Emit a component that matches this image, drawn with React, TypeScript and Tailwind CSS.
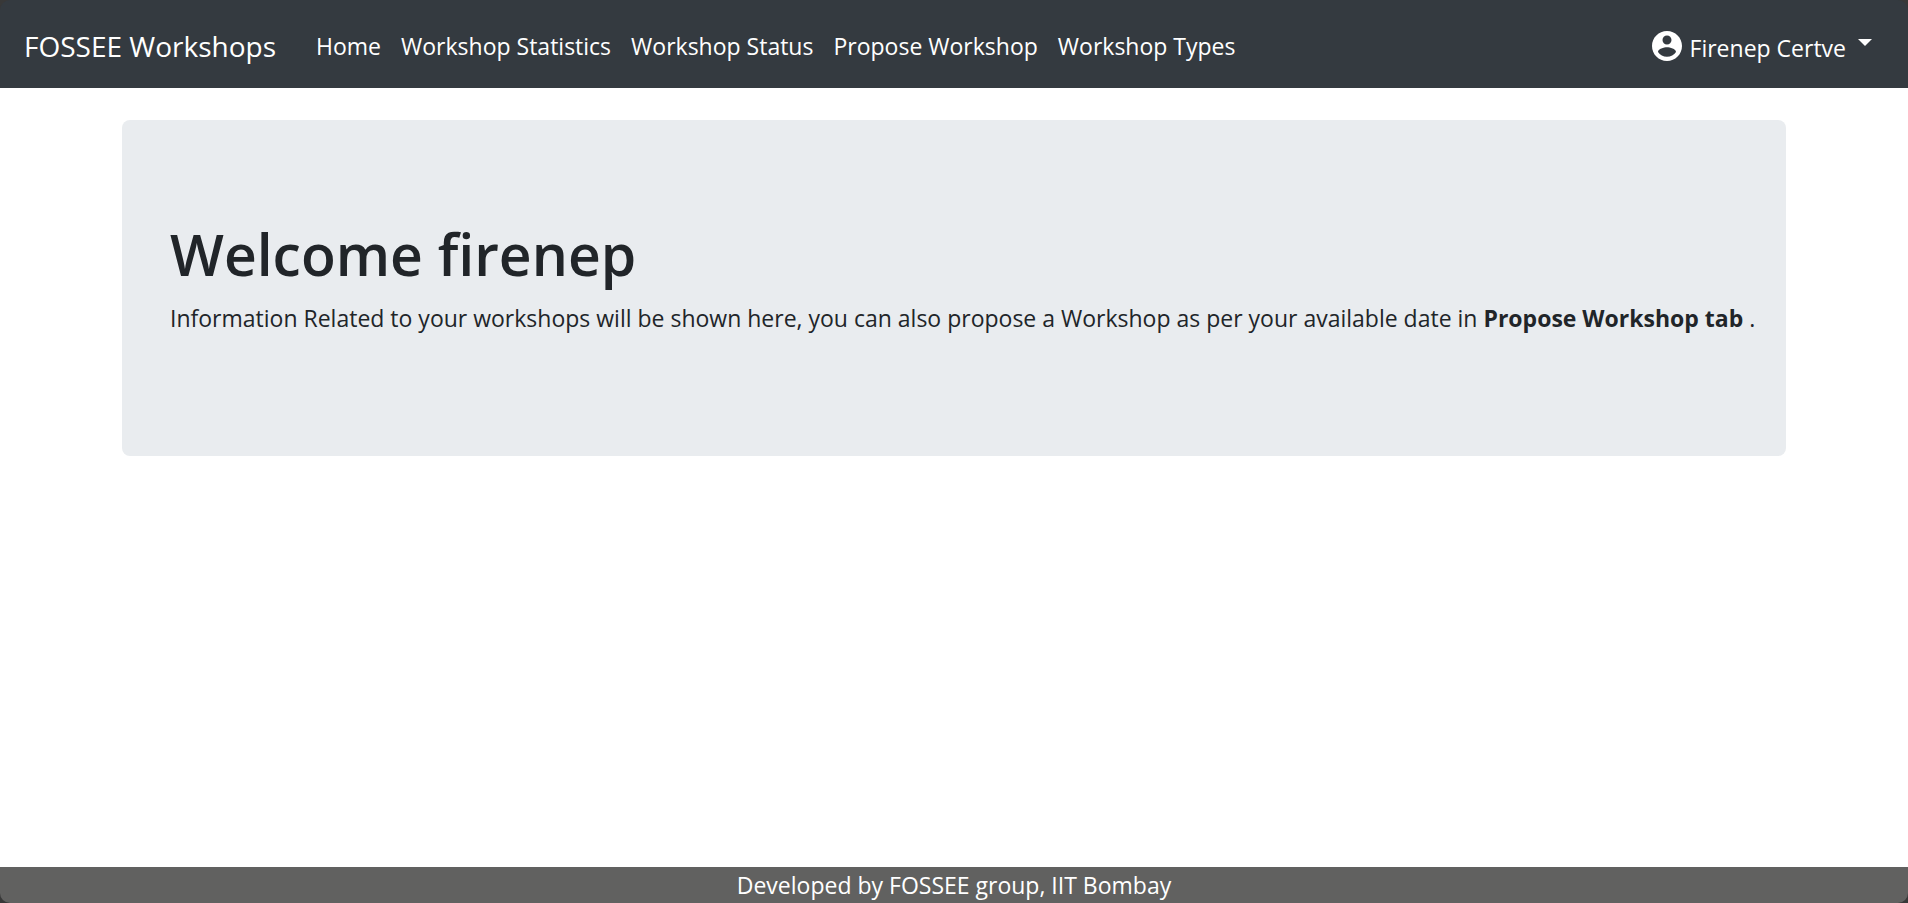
const links = ["Home", "Workshop Statistics", "Workshop Status", "Propose Workshop", "Workshop Types"];

function AccountIcon() {
  return (
    <svg viewBox="2 2 20 20" className="size-[30px] fill-white" aria-hidden="true">
      <path d="M12 2C6.48 2 2 6.48 2 12s4.48 10 10 10 10-4.48 10-10S17.52 2 12 2zm0 3c1.66 0 3 1.34 3 3s-1.34 3-3 3-3-1.34-3-3 1.34-3 3-3zm0 14.2c-2.5 0-4.71-1.28-6-3.22.03-1.99 4-3.08 6-3.08 1.99 0 5.97 1.09 6 3.08-1.29 1.94-3.5 3.22-6 3.22z" />
    </svg>
  );
}

export default function App() {
  return (
    <div className="flex min-h-screen flex-col bg-[#383838] font-['Open_Sans','Noto_Sans',sans-serif] text-[23px] leading-9 text-[#212529]">
      <nav className="flex min-h-[88px] items-center rounded-t-[10px] bg-[#343a40] px-6 pt-1 text-white">
        <a href="#" className="mr-10 text-[28px] whitespace-nowrap">FOSSEE Workshops</a>
        <ul className="flex gap-5">
          {links.map((link) => (
            <li key={link}>
              <a href="#" className="block whitespace-nowrap">{link}</a>
            </li>
          ))}
        </ul>
        <button type="button" className="ml-auto flex items-center pr-3">
          <AccountIcon />
          <span className="mt-1 ml-2 whitespace-nowrap">Firenep Certve</span>
          <svg viewBox="0 0 14 7" className="mb-2 ml-3 h-[7px] w-[14px] fill-white" aria-hidden="true">
            <path d="M0 0h14L7 7z" />
          </svg>
        </button>
      </nav>
      <main className="flex-1 bg-white pt-8">
        <div className="mx-auto max-w-[1710px] px-[23px]">
          <section className="rounded-lg bg-[#e9ecef] py-24 pr-6 pl-12">
            <h1 className="mb-2 text-[57px] leading-[76px] font-semibold">Welcome firenep</h1>
            <p className="mb-6">
              Information Related to your workshops will be shown here, you can also propose a Workshop as per your
              available date in <b>Propose Workshop tab</b> .
            </p>
          </section>
        </div>
      </main>
      <footer className="rounded-b-[10px] bg-[#616160] text-center text-white">
        Developed by FOSSEE group, IIT Bombay
      </footer>
    </div>
  );
}
